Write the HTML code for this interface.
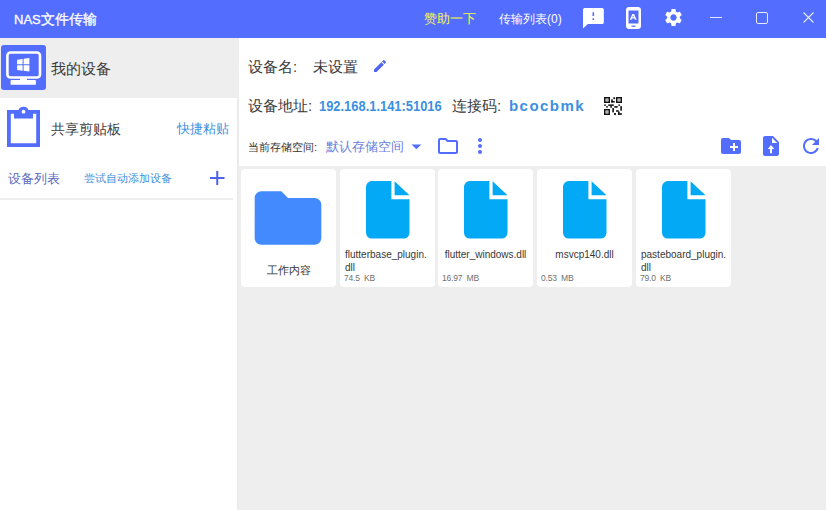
<!DOCTYPE html>
<html><head><meta charset="utf-8">
<style>
*{margin:0;padding:0;box-sizing:border-box}
html,body{width:826px;height:510px;overflow:hidden;background:#eeeeee;font-family:"Liberation Sans",sans-serif;color:#222}
.a{position:absolute;white-space:nowrap;line-height:1}
svg{position:absolute;display:block}
#title{position:absolute;left:0;top:0;width:826px;height:38px;background:#536dfe}
#side{position:absolute;left:0;top:38px;width:237px;height:472px;background:#fff}
#panel{position:absolute;left:239px;top:38px;width:587px;height:128px;background:#fff}
.card{position:absolute;top:169px;width:94.5px;height:118px;background:#fff;border-radius:4px}
.fn{position:absolute;left:0;top:78.5px;width:95px;text-align:center;font-size:10px;line-height:13px;color:#383838;white-space:nowrap}
.fn span{display:inline-block;text-align:left}
.sz{position:absolute;left:4px;top:105px;font-size:8.5px;letter-spacing:-0.2px;line-height:1;color:#707070;white-space:pre}
</style></head><body>
<div id="title">
  <div class="a" style="left:14px;top:12px;font-size:14px;color:#fff;-webkit-text-stroke:0.3px #fff"><span style="font-size:13px">NAS</span>文件传输</div>
  <div class="a" style="left:424px;top:12px;font-size:13px;color:#f8f848">赞助一下</div>
  <div class="a" style="left:499px;top:13px;font-size:12px;color:#fff">传输列表(0)</div>
  <!-- feedback -->
  <svg style="left:583px;top:8px" width="21" height="21" viewBox="0 0 21 21"><path fill="#fff" fill-rule="evenodd" d="M1.6 0H19.2A1.6 1.6 0 0 1 20.8 1.6V14.4A1.6 1.6 0 0 1 19.2 16H4.8L0 20.4V1.6A1.6 1.6 0 0 1 1.6 0Z M9.5 4.2H11.1V8H9.5Z M9.5 10.2H11.1V12H9.5Z"/></svg>
  <!-- phone -->
  <svg style="left:626px;top:7px" width="15" height="22" viewBox="0 0 15 22">
    <rect x="1.25" y="1.25" width="12.5" height="19.5" rx="2" fill="none" stroke="#fff" stroke-width="2.5"/>
    <rect x="1" y="1" width="13" height="2.5" fill="#fff"/>
    <rect x="1" y="16.5" width="13" height="4" fill="#fff"/>
    <rect x="5.5" y="18.6" width="4" height="1.2" fill="#536dfe"/>
    <path fill="#fff" d="M3.8 12.7L6.3 7.1H8.1L10.6 12.7H8.9L8.5 11.6H5.9L5.5 12.7Z M6.4 10.3H8L7.2 8.4Z"/>
  </svg>
  <!-- gear -->
  <svg style="left:662.5px;top:7.3px" width="21" height="21" viewBox="0 0 24 24"><path fill="#fff" d="M19.14 12.94c.04-.3.06-.61.06-.94 0-.32-.02-.64-.07-.94l2.03-1.58c.18-.14.23-.41.12-.61l-1.92-3.32c-.12-.22-.37-.29-.59-.22l-2.39.96c-.5-.38-1.03-.7-1.62-.94l-.36-2.54c-.04-.24-.24-.41-.48-.41h-3.84c-.24 0-.43.17-.47.41l-.36 2.54c-.59.24-1.13.57-1.62.94l-2.39-.96c-.22-.08-.47 0-.59.22L2.74 8.87c-.12.21-.08.47.12.61l2.03 1.58c-.05.3-.09.63-.09.94s.02.64.07.94l-2.03 1.58c-.18.14-.23.41-.12.61l1.92 3.32c.12.22.37.29.59.22l2.39-.96c.5.38 1.03.7 1.62.94l.36 2.54c.05.24.24.41.48.41h3.84c.24 0 .44-.17.47-.41l.36-2.54c.59-.24 1.13-.56 1.62-.94l2.39.96c.22.08.47 0 .59-.22l1.92-3.32c.12-.22.07-.47-.12-.61l-2.01-1.58zM12 15.6c-1.98 0-3.6-1.62-3.6-3.6s1.62-3.6 3.6-3.6 3.6 1.62 3.6 3.6-1.62 3.6-3.6 3.6z"/></svg>
  <!-- min / max / close -->
  <div class="a" style="left:710px;top:17px;width:12px;height:1px;background:#e6eaff"></div>
  <div class="a" style="left:756px;top:12px;width:12px;height:12px;border:1px solid #e6eaff;border-radius:2px"></div>
  <svg style="left:803px;top:12px" width="11" height="11" viewBox="0 0 11 11"><path d="M0.5 0.5L10.5 10.5M10.5 0.5L0.5 10.5" stroke="#e6eaff" stroke-width="1.1"/></svg>
</div>
<div id="side">
  <div class="a" style="left:0;top:0;width:239px;height:60px;background:#eeeeee"></div>
  <svg style="left:1px;top:7px" width="45" height="45" viewBox="0 0 45 45">
    <rect x="0" y="0" width="45" height="45" rx="3" fill="#536dfe"/>
    <rect x="6.4" y="7.5" width="32.6" height="25" rx="3" fill="none" stroke="#fff" stroke-width="2.6"/>
    <path fill="#fff" d="M19 33h7v2h8.2c0.4 0 0.7 0.3 0.7 0.7v4H9.6v-4c0-0.4 0.3-0.7 0.7-0.7H19z"/>
    <path fill="#fff" d="M16.1 14.7l5.5-0.8v5.4h-5.5zM22.6 13.8l5.8-0.8v6.3h-5.8zM16.1 20.3h5.5v5.4l-5.5-0.8zM22.6 20.3h5.8v6.3l-5.8-0.8z"/>
  </svg>
  <div class="a" style="left:51px;top:23px;font-size:15px;color:#3a3a3a">我的设备</div>
  <svg style="left:7px;top:68px" width="34" height="41" viewBox="0 0 34 41">
    <path fill="#536dfe" fill-rule="evenodd" d="M0 4H11.5A5.5 5.5 0 0 1 21.5 4H33V41H0Z M3.8 7.8V37.2H29.2V7.8H26V12.6H7V7.8Z M16.5 3.8a1.9 1.9 0 1 0 0.01 0Z"/>
  </svg>
  <div class="a" style="left:51px;top:84px;font-size:14px;color:#3f3f3f">共享剪贴板</div>
  <div class="a" style="left:177px;top:84px;font-size:13px;color:#3d8fe0">快捷粘贴</div>
  <div class="a" style="left:8px;top:134px;font-size:13px;color:#5c6bc0">设备列表</div>
  <div class="a" style="left:84px;top:135px;font-size:11px;color:#3d8fe0">尝试自动添加设备</div>
  <svg style="left:210px;top:133.3px" width="14.5" height="14" viewBox="0 0 14.5 14"><path d="M7.25 0V14M0 7H14.5" stroke="#4f62e8" stroke-width="2"/></svg>
  <div class="a" style="left:0;top:160px;width:233px;height:2px;background:#eeeeee"></div>
</div>
<div class="a" style="left:237px;top:98px;width:2px;height:412px;background:#ebebeb"></div>
<div id="panel">
  <div class="a" style="left:9px;top:21px;font-size:15px;color:#3a3a3a">设备名:</div>
  <div class="a" style="left:74px;top:21px;font-size:15px;color:#3a3a3a">未设置</div>
  <svg style="left:133.1px;top:20px" width="16" height="16" viewBox="0 0 24 24"><path fill="#5066f0" d="M3 17.25V21h3.75L17.81 9.94l-3.75-3.75L3 17.25zM20.71 7.04c.39-.39.39-1.02 0-1.41l-2.34-2.34c-.39-.39-1.02-.39-1.41 0l-1.83 1.83 3.75 3.75 1.83-1.83z"/></svg>
  <div class="a" style="left:9px;top:60px;font-size:15px;color:#3a3a3a">设备地址:</div>
  <div class="a" style="left:80px;top:60px;font-size:15px;font-weight:bold;color:#3d8fe0;transform:scaleX(0.86);transform-origin:0 0">192.168.1.141:51016</div>
  <div class="a" style="left:213px;top:60px;font-size:15px;color:#3a3a3a">连接码:</div>
  <div class="a" style="left:270px;top:60px;font-size:15px;font-weight:bold;color:#3d8fe0;letter-spacing:1.45px">bcocbmk</div>
  <svg style="left:365px;top:59px" width="18" height="18" viewBox="0 0 18 18">
    <g fill="#111">
      <path fill-rule="evenodd" d="M0 0h6v6H0zM1.5 1.5v3h3v-3z"/>
      <path fill-rule="evenodd" d="M12 0h6v6h-6zM13.5 1.5v3h3v-3z"/>
      <path fill-rule="evenodd" d="M0 12h6v6H0zM1.5 13.5v3h3v-3z"/>
      <rect x="2.3" y="2.3" width="1.4" height="1.4" fill="#666"/>
      <rect x="14.3" y="2.3" width="1.4" height="1.4" fill="#666"/>
      <rect x="2.3" y="14.3" width="1.4" height="1.4" fill="#666"/>
      <rect x="9.3" y="0.3" width="1.8" height="1.8"/>
      <rect x="7.2" y="2.3" width="1.6" height="3.2"/><rect x="7.2" y="4" width="3.6" height="1.5"/>
      <rect x="0.2" y="7.4" width="1.6" height="1.5"/><rect x="4.2" y="7.4" width="5.6" height="1.5"/><rect x="14.4" y="7.4" width="1.5" height="1.5"/>
      <rect x="2.2" y="9.1" width="1.6" height="1.6"/><rect x="6.2" y="9.1" width="1.7" height="1.6"/><rect x="10.3" y="9.1" width="3.4" height="1.6"/><rect x="16.3" y="9.1" width="1.6" height="4.6"/>
      <rect x="8.3" y="11" width="1.6" height="4.4"/>
      <rect x="12.1" y="13.2" width="2.6" height="1.6"/>
      <rect x="10.1" y="16" width="1.8" height="2"/><rect x="14" y="14.5" width="1.6" height="3.3"/><rect x="14" y="16.2" width="3.9" height="1.6"/>
    </g>
  </svg>
  <div class="a" style="left:9px;top:104px;font-size:11px;color:#333">当前存储空间:</div>
  <div class="a" style="left:87px;top:102px;font-size:13px;color:#6b80dc">默认存储空间</div>
  <svg style="left:172px;top:106px" width="11" height="6" viewBox="0 0 11 6"><path fill="#536dfe" d="M0.5 0.5H10.3L5.4 5.3Z"/></svg>
  <svg style="left:197px;top:96px" width="24" height="24" viewBox="0 0 24 24"><path fill="#536dfe" d="M9.17 6l2 2H20v10H4V6h5.17M10 4H4c-1.1 0-1.99.9-1.99 2L2 18c0 1.1.9 2 2 2h16c1.1 0 2-.9 2-2V8c0-1.1-.9-2-2-2h-8l-2-2z"/></svg>
  <svg style="left:229px;top:96px" width="24" height="24" viewBox="0 0 24 24"><path fill="#536dfe" d="M12 8c1.1 0 2-.9 2-2s-.9-2-2-2-2 .9-2 2 .9 2 2 2zm0 2c-1.1 0-2 .9-2 2s.9 2 2 2 2-.9 2-2-.9-2-2-2zm0 6c-1.1 0-2 .9-2 2s.9 2 2 2 2-.9 2-2-.9-2-2-2z"/></svg>
  <svg style="left:480px;top:96px" width="24" height="24" viewBox="0 0 24 24"><path fill="#536dfe" d="M20 6h-8l-2-2H4c-1.11 0-1.99.89-1.99 2L2 18c0 1.11.89 2 2 2h16c1.11 0 2-.89 2-2V8c0-1.11-.89-2-2-2zm-1 8h-3v3h-2v-3h-3v-2h3V9h2v3h3v2z"/></svg>
  <svg style="left:520px;top:96px" width="24" height="24" viewBox="0 0 24 24"><path fill="#536dfe" d="M14 2H6c-1.1 0-1.99.9-1.99 2L4 20c0 1.1.89 2 1.99 2H18c1.1 0 2-.9 2-2V8l-6-6z"/><path fill="#fff" d="M13 9V3.8L18.2 9H13zM12 11L8.8 15H11V19.2H13V15H15.2Z"/></svg>
  <svg style="left:560px;top:96px" width="24" height="24" viewBox="0 0 24 24"><path fill="#536dfe" d="M17.65 6.35C16.2 4.9 14.21 4 12 4c-4.42 0-7.99 3.58-7.99 8s3.57 8 7.99 8c3.73 0 6.84-2.55 7.73-6h-2.08c-.82 2.33-3.04 4-5.65 4-3.31 0-6-2.69-6-6s2.69-6 6-6c1.66 0 3.14.69 4.22 1.780L13 11h7V4l-2.35 2.35z"/></svg>
</div>
<!-- cards -->
<div class="card" style="left:241px">
  <svg style="left:7px;top:9px" width="80" height="80" viewBox="0 0 24 24"><path fill="#448aff" d="M10 4H4c-1.1 0-1.99.9-1.99 2L2 18c0 1.1.9 2 2 2h16c1.1 0 2-.9 2-2V8c0-1.1-.9-2-2-2h-8l-2-2z"/></svg>
  <div class="a" style="left:26px;top:96px;font-size:11px;color:#333">工作内容</div>
</div>
<div class="card" style="left:340px">
  <svg style="left:25.6px;top:11.7px" width="44" height="58" viewBox="0 0 44 58"><path fill="#03a9f4" d="M5.8 0H25.4V18.3H43.5V51.8A5.8 5.8 0 0 1 37.7 57.6H5.8A5.8 5.8 0 0 1 0 51.8V5.8A5.8 5.8 0 0 1 5.8 0Z M28.6 0.3L43.5 14.3H28.6Z"/></svg>
  <div class="fn" style="left:5px;text-align:left"><span>flutterbase_plugin.<br>dll</span></div>
  <div class="sz">74.5  KB</div>
</div>
<div class="card" style="left:438px">
  <svg style="left:25.6px;top:11.7px" width="44" height="58" viewBox="0 0 44 58"><path fill="#03a9f4" d="M5.8 0H25.4V18.3H43.5V51.8A5.8 5.8 0 0 1 37.7 57.6H5.8A5.8 5.8 0 0 1 0 51.8V5.8A5.8 5.8 0 0 1 5.8 0Z M28.6 0.3L43.5 14.3H28.6Z"/></svg>
  <div class="fn"><span>flutter_windows.dll</span></div>
  <div class="sz">16.97  MB</div>
</div>
<div class="card" style="left:537px">
  <svg style="left:25.6px;top:11.7px" width="44" height="58" viewBox="0 0 44 58"><path fill="#03a9f4" d="M5.8 0H25.4V18.3H43.5V51.8A5.8 5.8 0 0 1 37.7 57.6H5.8A5.8 5.8 0 0 1 0 51.8V5.8A5.8 5.8 0 0 1 5.8 0Z M28.6 0.3L43.5 14.3H28.6Z"/></svg>
  <div class="fn"><span>msvcp140.dll</span></div>
  <div class="sz">0.53  MB</div>
</div>
<div class="card" style="left:636px">
  <svg style="left:25.6px;top:11.7px" width="44" height="58" viewBox="0 0 44 58"><path fill="#03a9f4" d="M5.8 0H25.4V18.3H43.5V51.8A5.8 5.8 0 0 1 37.7 57.6H5.8A5.8 5.8 0 0 1 0 51.8V5.8A5.8 5.8 0 0 1 5.8 0Z M28.6 0.3L43.5 14.3H28.6Z"/></svg>
  <div class="fn" style="left:5px;text-align:left"><span>pasteboard_plugin.<br>dll</span></div>
  <div class="sz">79.0  KB</div>
</div>
</body></html>
